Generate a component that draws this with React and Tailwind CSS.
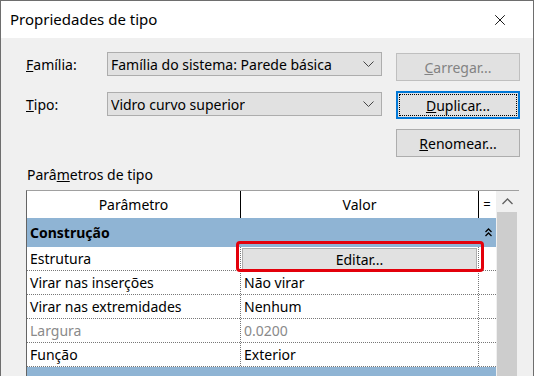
import { X } from "lucide-react";

const font = { fontFamily: '"Noto Sans", "Open Sans", sans-serif' };

function Chevron() {
  return (
    <svg width="11" height="7" viewBox="0 0 11 7" className="shrink-0">
      <path d="M0.5 0.5 L5.5 5.5 L10.5 0.5" fill="none" stroke="#444" strokeWidth="1" />
    </svg>
  );
}

function Dropdown({ value }) {
  return (
    <div className="flex h-[24px] w-[275px] items-center justify-between border border-[#adadad] bg-[#e1e1e1] pl-[3px] pr-[7px]">
      <span className="truncate">{value}</span>
      <Chevron />
    </div>
  );
}

function Btn({ children, className = "" }) {
  return (
    <div
      className={`flex h-[28px] w-[124px] items-center justify-center border border-[#adadad] bg-[#e1e1e1] ${className}`}
    >
      {children}
    </div>
  );
}

const rows = [
  { p: "Virar nas inserções", v: "Não virar" },
  { p: "Virar nas extremidades", v: "Nenhum" },
  { p: "Largura", v: "0.0200", muted: true },
  { p: "Função", v: "Exterior" },
];

export default function App() {
  return (
    <div
      className="flex h-[376px] w-[534px] flex-col overflow-hidden border-x border-t border-[#6e6e6e] bg-white text-[14px] text-black"
      style={font}
    >
      {/* title bar */}
      <div className="flex h-[37px] shrink-0 items-center justify-between bg-white pl-[9px] pr-[24px]">
        <span className="text-[15px]">Propriedades de tipo</span>
        <X size={18} strokeWidth={1.2} />
      </div>

      <div className="flex-1 bg-[#f0f0f0] pl-[25px]">
        {/* top */}
        <div className="flex pt-[14px]">
          <div className="flex w-[370px] flex-col gap-[16px]">
            <div className="flex items-center">
              <span className="w-[81px]">
                <u>F</u>amília:
              </span>
              <Dropdown value="Família do sistema: Parede básica" />
            </div>
            <div className="flex items-center">
              <span className="w-[81px]">
                <u>T</u>ipo:
              </span>
              <Dropdown value="Vidro curvo superior" />
            </div>
          </div>
          <div className="flex flex-col gap-[10px] pt-[1px]">
            <Btn className="border-[#bfbfbf] bg-[#cccccc] text-[#838383]">
              <span>
                <u>C</u>arregar...
              </span>
            </Btn>
            <div className="flex h-[28px] w-[124px] items-center justify-center border-2 border-[#0078d7] bg-[#e1e1e1] p-[1px]">
              <div className="flex h-full w-full items-center justify-center border border-dotted border-black">
                <span>
                  <u>D</u>uplicar...
                </span>
              </div>
            </div>
            <Btn>
              <span>
                <u>R</u>enomear...
              </span>
            </Btn>
          </div>
        </div>

        <div className="mt-[8px] pl-[1px] leading-[20px]">
          Parâ<u>m</u>etros de tipo
        </div>

        {/* grid */}
        <div className="mt-[5px] flex w-[493px] border-l border-t border-l-[#646464] border-t-[#a0a0a0]">
          <div className="w-[469px] bg-white">
            <div className="flex h-[27px] items-center">
              <div className="flex h-full w-[214px] items-center justify-center border-r border-black">
                Parâmetro
              </div>
              <div className="flex h-full w-[238px] items-center justify-center border-r border-black">
                Valor
              </div>
              <div className="flex h-full w-[16px] items-center justify-center text-[13px]">=</div>
            </div>
            <div className="flex h-[29px] items-center justify-between bg-[#8fb4d4] pl-[3px] pr-[4px] font-bold">
              <span>Construção</span>
              <svg width="7" height="9" viewBox="0 0 7 9">
                <path d="M0.5 4 L3.5 1 L6.5 4 M0.5 8 L3.5 5 L6.5 8" fill="none" stroke="#000" strokeWidth="1.3" />
              </svg>
            </div>
            <div className="flex h-[24px] border-b border-dotted border-[#777]">
              <div className="flex w-[214px] items-center border-r border-dotted border-[#777] pl-[3px]">
                Estrutura
              </div>
              <div className="relative w-[238px] border-r border-dotted border-[#777]">
                <div className="absolute left-[-5px] top-[-6px] h-[31px] w-[248px] rounded-[4px] border-[3px] border-[#e3000b]" />
                <div className="mx-[1px] mt-[1px] flex h-[22px] items-center justify-center border border-[#adadad] bg-[#e1e1e1]">
                  Editar...
                </div>
              </div>
            </div>
            {rows.map((r) => (
              <div key={r.p} className={`flex h-[24px] border-b border-dotted border-[#777] ${r.muted ? "text-[#8a8a8a]" : ""}`}>
                <div className="flex w-[214px] items-center border-r border-dotted border-[#777] pl-[3px]">{r.p}</div>
                <div className="flex w-[238px] items-center border-r border-dotted border-[#777] pl-[3px]">{r.v}</div>
              </div>
            ))}
            <div className="h-[20px] bg-[#8fb4d4]" />
          </div>
          <div className="flex w-[22px] flex-col bg-[#f0f0f0]">
            <div className="flex h-[21px] items-center justify-center">
              <svg width="11" height="7" viewBox="0 0 11 7">
                <path d="M0.5 6 L5.5 1 L10.5 6" fill="none" stroke="#606060" strokeWidth="1.3" />
              </svg>
            </div>
            <div className="mx-[1px] h-[200px] bg-[#cdcdcd]" />
          </div>
        </div>
      </div>
    </div>
  );
}
